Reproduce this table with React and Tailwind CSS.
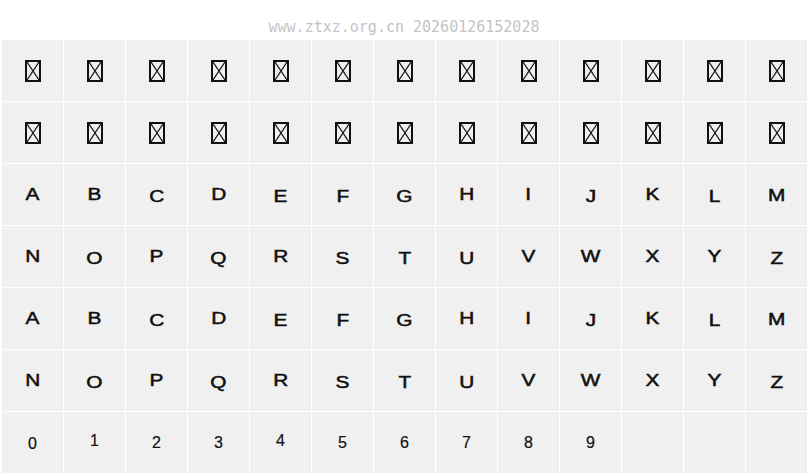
import React from "react";

// fallback glyph box, as the browser draws a missing character
function Tofu() {
  return (
    <svg width="16" height="22" viewBox="0 0 16 22" fill="none">
      <rect x="1" y="1" width="14" height="20" stroke="#111" strokeWidth="2" />
      <path d="M2 2 L14 20 M14 2 L2 20" stroke="#111" strokeWidth="1.3" />
    </svg>
  );
}

// small baseline shifts the font in the picture has
const shift = {
  C: "translate-y-[2px]", E: "translate-y-[2px]", F: "translate-y-[2px]", G: "translate-y-[2px]",
  J: "translate-y-[2px]", L: "translate-y-[2px]", O: "translate-y-[2px]", Q: "translate-y-[2px]",
  S: "translate-y-[2px]", T: "translate-y-[2px]", U: "translate-y-[2px]", Z: "translate-y-[2px]",
  M: "translate-y-[1px]", 0: "translate-y-[1px]", 1: "-translate-y-[2px]", 4: "-translate-y-[2px]",
};

const letters = "ABCDEFGHIJKLMNOPQRSTUVWXYZ".split("");
const digits = "0123456789".split("");

export default function App() {
  const cells = [
    ...Array(26).fill(null),
    ...letters,
    ...letters,
    ...digits,
    "", "", "",
  ];

  return (
    <div className="w-[808px] h-[476px] bg-white overflow-hidden">
      <div className="h-10 pt-[19px] text-center text-[15px] leading-[17px] text-[#c4c4c4] font-['DejaVu_Sans_Mono',monospace]">
        www.ztxz.org.cn 20260126152028
      </div>
      <div className="pl-[2px] grid grid-cols-[repeat(13,61px)] auto-rows-[61px] gap-px">
        {cells.map((c, i) => (
          <div key={i} className="bg-[#f0f0f0] flex items-center justify-center">
            {c === null ? (
              <Tofu />
            ) : /[0-9]/.test(c) ? (
              <span className={`inline-block text-[16px] leading-none text-[#111] font-['Liberation_Sans',Arial,sans-serif] [-webkit-text-stroke:0.2px_#111] ${shift[c] || ""}`}>
                {c}
              </span>
            ) : (
              <span
                className={`inline-block scale-x-[1.3] text-[16px] leading-none text-[#111] font-['Liberation_Sans',Arial,sans-serif] [-webkit-text-stroke:0.5px_#111] ${shift[c] || ""}`}
              >
                {c}
              </span>
            )}
          </div>
        ))}
      </div>
    </div>
  );
}
